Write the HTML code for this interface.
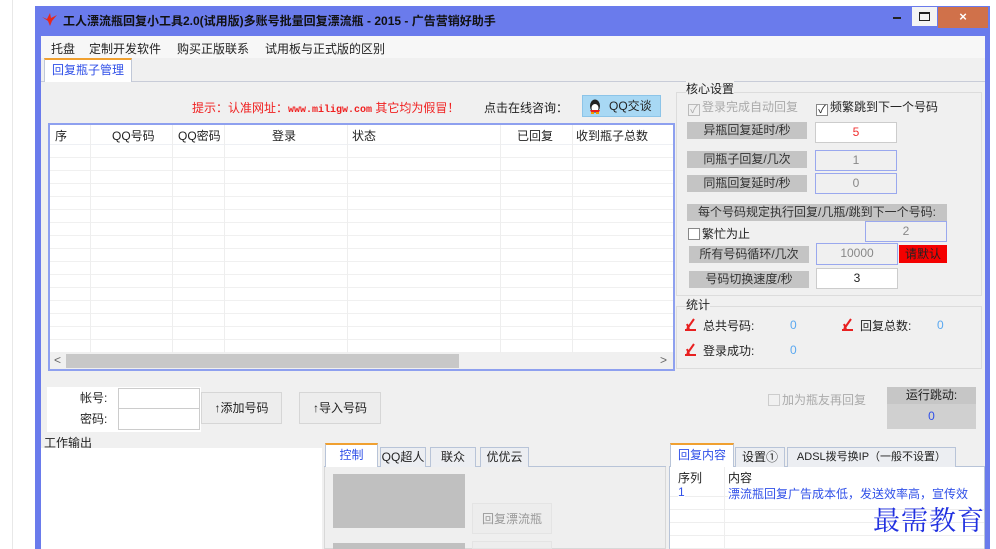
<!DOCTYPE html>
<html><head><meta charset="utf-8"><style>
*{margin:0;padding:0;box-sizing:border-box}
body{width:996px;height:549px;overflow:hidden;background:#fff;position:relative;font-family:"Liberation Sans","Noto Sans CJK SC",sans-serif;font-size:12px;color:#222}
.a{position:absolute;white-space:nowrap}
.lbl{position:absolute;background:#c4c4c4;text-align:center;line-height:17px;color:#333}
.inp{position:absolute;background:#f0f0f0;border:1px solid #9aa8ee;text-align:center;line-height:18px;color:#888}
.cb{display:inline-block;width:12px;height:12px;border:1px solid #888;background:#fff;vertical-align:-2px;margin-right:2px;font-size:11px;line-height:10px;text-align:center}
.tab{position:absolute;border:1px solid #b8c4d8;border-bottom:none;background:#eceef2;text-align:center;line-height:20px}
.btn{position:absolute;background:#ededed;border:1px solid #d6d6d6;text-align:center}
</style></head><body>
<div class="a" style="left:12px;top:0;width:1px;height:549px;background:#e8e8e8"></div>
<!-- window -->
<div class="a" style="left:35px;top:6px;width:955px;height:543px;background:#6a7bec"></div>
<svg class="a" style="left:41px;top:11px" width="18" height="16" viewBox="0 0 18 16"><path d="M1 6 L6 8 L9 2 L10 7 L16 4 L11 10 L9 15 L7 10 Z" fill="#e8281c"/></svg>
<div class="a" style="left:63px;top:12px;font-weight:bold;font-size:12px;color:#111">工人漂流瓶回复小工具2.0(试用版)多账号批量回复漂流瓶 - 2015 - 广告营销好助手</div>
<div class="a" style="left:893px;top:17px;width:8px;height:2px;background:#222"></div>
<div class="a" style="left:912px;top:7px;width:25px;height:19px;background:#f4f4f4"></div>
<div class="a" style="left:919px;top:12px;width:11px;height:9px;border:1px solid #222;border-top-width:2px"></div>
<div class="a" style="left:938px;top:7px;width:50px;height:21px;background:#d0714a;color:#fff;text-align:center;font-size:13px;line-height:20px;font-weight:bold">×</div>
<div class="a" style="left:41px;top:36px;width:944px;height:513px;background:#f0f0f0"></div>
<div class="a" style="left:41px;top:36px;width:944px;height:22px;background:#f7f7f7"></div>
<div class="a" style="left:51px;top:40px">托盘</div>
<div class="a" style="left:89px;top:40px">定制开发软件</div>
<div class="a" style="left:177px;top:40px">购买正版联系</div>
<div class="a" style="left:265px;top:40px">试用板与正式版的区别</div>
<div class="a" style="left:41px;top:81px;width:944px;height:1px;background:#c8ccd8"></div>
<div class="a" style="left:44px;top:58px;width:88px;height:24px;background:#fff;border:1px solid #c0c8d8;border-top:2px solid #f0a030;border-bottom:none;color:#3050e8;text-align:center;line-height:20px">回复瓶子管理</div>
<!-- tip -->
<div class="a" style="left:192px;top:99px;color:#f02020">提示：认准网址：<span style="font-family:'Liberation Mono',monospace;font-size:10px;font-weight:bold">www.miligw.com</span> 其它均为假冒！</div>
<div class="a" style="left:484px;top:99px">点击在线咨询：</div>
<div class="a" style="left:582px;top:95px;width:79px;height:22px;background:#a8d8f4;border:1px solid #8cc4e8;line-height:20px;padding-left:26px">QQ交谈</div>
<svg class="a" style="left:588px;top:98px" width="14" height="16" viewBox="0 0 14 16"><ellipse cx="7" cy="8" rx="5" ry="6.5" fill="#222"/><ellipse cx="7" cy="10" rx="3.5" ry="4" fill="#fff"/><path d="M2 12 L12 12 L11 14 L3 14Z" fill="#e82020"/><path d="M3 15 L6 15 M8 15 L11 15" stroke="#f0a000" stroke-width="2"/></svg>
<!-- table -->
<div class="a" style="left:48px;top:123px;width:627px;height:248px;background:#fff;border:2px solid #8ea0ef"></div>
<div class="a" style="left:50px;top:125px;width:623px;height:20px;border-bottom:1px solid #eef0f4"></div>
<div class="a" style="left:50px;top:145px;width:623px;height:208px;background:repeating-linear-gradient(#fff 0,#fff 12px,#f0f0f0 12px,#f0f0f0 13px)"></div>
<div class="a" style="left:90px;top:125px;width:1px;height:228px;background:#eee"></div>
<div class="a" style="left:172px;top:125px;width:1px;height:228px;background:#eee"></div>
<div class="a" style="left:224px;top:125px;width:1px;height:228px;background:#eee"></div>
<div class="a" style="left:347px;top:125px;width:1px;height:228px;background:#eee"></div>
<div class="a" style="left:500px;top:125px;width:1px;height:228px;background:#eee"></div>
<div class="a" style="left:572px;top:125px;width:1px;height:228px;background:#eee"></div>
<div class="a" style="left:55px;top:127px">序</div>
<div class="a" style="left:112px;top:127px">QQ号码</div>
<div class="a" style="left:178px;top:127px">QQ密码</div>
<div class="a" style="left:272px;top:127px">登录</div>
<div class="a" style="left:352px;top:127px">状态</div>
<div class="a" style="left:517px;top:127px">已回复</div>
<div class="a" style="left:576px;top:127px">收到瓶子总数</div>
<div class="a" style="left:50px;top:353px;width:623px;height:16px;background:#f0f0f0"></div>
<div class="a" style="left:66px;top:354px;width:393px;height:14px;background:#c8c8c8"></div>
<div class="a" style="left:54px;top:353px;color:#666">&lt;</div>
<div class="a" style="left:660px;top:353px;color:#666">&gt;</div>
<!-- right core settings -->
<div class="a" style="left:676px;top:92px;width:306px;height:204px;border:1px solid #dcdcdc"></div>
<div class="a" style="left:686px;top:80px;background:#f0f0f0">核心设置</div>
<div class="a" style="left:688px;top:98px;color:#aaa"><span class="cb" style="border-color:#bbb;background:#f0f0f0;color:#aaa">✓</span>登录完成自动回复</div>
<div class="a" style="left:816px;top:98px"><span class="cb">✓</span>频繁跳到下一个号码</div>
<div class="lbl" style="left:687px;top:122px;width:120px">异瓶回复延时/秒</div>
<div class="inp" style="left:815px;top:122px;width:82px;height:21px;background:#fff;border-color:#ccc;color:#f03030">5</div>
<div class="lbl" style="left:687px;top:151px;width:120px">同瓶子回复/几次</div>
<div class="inp" style="left:815px;top:150px;width:82px;height:21px">1</div>
<div class="lbl" style="left:687px;top:175px;width:120px">同瓶回复延时/秒</div>
<div class="inp" style="left:815px;top:173px;width:82px;height:21px">0</div>
<div class="lbl" style="left:687px;top:204px;width:260px">每个号码规定执行回复/几瓶/跳到下一个号码:</div>
<div class="a" style="left:688px;top:225px"><span class="cb"></span>繁忙为止</div>
<div class="inp" style="left:865px;top:221px;width:82px;height:21px">2</div>
<div class="lbl" style="left:689px;top:246px;width:120px">所有号码循环/几次</div>
<div class="inp" style="left:816px;top:243px;width:82px;height:22px">10000</div>
<div class="a" style="left:899px;top:245px;width:48px;height:18px;background:#f40000;text-align:center;line-height:18px;color:#222">请默认</div>
<div class="lbl" style="left:689px;top:271px;width:120px">号码切换速度/秒</div>
<div class="inp" style="left:816px;top:268px;width:82px;height:21px;background:#fff;border-color:#ccc;color:#222">3</div>
<div class="a" style="left:676px;top:306px;width:306px;height:63px;border:1px solid #dcdcdc"></div>
<div class="a" style="left:686px;top:296px;background:#f0f0f0">统计</div>
<svg class="a" style="left:684px;top:317px" width="14" height="14" viewBox="0 0 14 14"><path d="M1 13 L12 13 M3 12 L10 2 M5 12 L3 7" stroke="#e82020" stroke-width="2" fill="none"/></svg>
<div class="a" style="left:703px;top:317px">总共号码:</div>
<div class="a" style="left:790px;top:318px;color:#5aa8f0">0</div>
<svg class="a" style="left:841px;top:317px" width="14" height="14" viewBox="0 0 14 14"><path d="M1 13 L12 13 M3 12 L10 2 M5 12 L3 7" stroke="#e82020" stroke-width="2" fill="none"/></svg>
<div class="a" style="left:860px;top:317px">回复总数:</div>
<div class="a" style="left:937px;top:318px;color:#5aa8f0">0</div>
<svg class="a" style="left:684px;top:342px" width="14" height="14" viewBox="0 0 14 14"><path d="M1 13 L12 13 M3 12 L10 2 M5 12 L3 7" stroke="#e82020" stroke-width="2" fill="none"/></svg>
<div class="a" style="left:703px;top:342px">登录成功:</div>
<div class="a" style="left:790px;top:343px;color:#5aa8f0">0</div>
<!-- account area -->
<div class="a" style="left:47px;top:387px;width:154px;height:45px;background:#fff"></div>
<div class="a" style="left:80px;top:389px">帐号:</div>
<div class="a" style="left:80px;top:410px">密码:</div>
<div class="a" style="left:118px;top:388px;width:82px;height:21px;border:1px solid #ccc;background:#fff"></div>
<div class="a" style="left:118px;top:408px;width:82px;height:22px;border:1px solid #ccc;background:#fff"></div>
<div class="btn" style="left:201px;top:392px;width:81px;height:32px;line-height:30px">↑添加号码</div>
<div class="btn" style="left:299px;top:392px;width:82px;height:32px;line-height:30px">↑导入号码</div>
<div class="a" style="left:768px;top:391px;color:#aaa"><span class="cb" style="border-color:#ccc;background:#f0f0f0"></span>加为瓶友再回复</div>
<div class="a" style="left:887px;top:387px;width:89px;height:17px;background:#c6c6c6;text-align:center;line-height:17px">运行跳动:</div>
<div class="a" style="left:887px;top:404px;width:89px;height:25px;background:#d0d0d0;text-align:center;line-height:24px;color:#3050e8">0</div>
<!-- work output -->
<div class="a" style="left:44px;top:434px">工作输出</div>
<div class="a" style="left:41px;top:448px;width:281px;height:101px;background:#fff"></div>
<!-- middle tabs -->
<div class="a" style="left:324px;top:466px;width:342px;height:83px;border:1px solid #d8d8d8;background:#efefef"></div>
<div class="a" style="left:324px;top:466px;width:342px;height:1px;background:#b8c4d8"></div>
<div class="tab" style="left:325px;top:443px;width:53px;height:24px;background:#fff;border-top:2px solid #f0a030;color:#3050e8">控制</div>
<div class="tab" style="left:380px;top:447px;width:46px;height:20px;line-height:18px">QQ超人</div>
<div class="tab" style="left:430px;top:447px;width:46px;height:20px;line-height:18px">联众</div>
<div class="tab" style="left:480px;top:447px;width:49px;height:20px;line-height:18px">优优云</div>
<div class="a" style="left:333px;top:474px;width:132px;height:54px;background:#c0c0c0"></div>
<div class="btn" style="left:472px;top:503px;width:80px;height:31px;line-height:30px;color:#999;border-color:#e4e4e4">回复漂流瓶</div>
<div class="a" style="left:333px;top:543px;width:132px;height:6px;background:#c0c0c0"></div>
<div class="btn" style="left:472px;top:541px;width:80px;height:8px;border-color:#e4e4e4"></div>
<!-- right tabs -->
<div class="a" style="left:669px;top:466px;width:316px;height:83px;background:#fff;border:1px solid #b8c4d8"></div>
<div class="tab" style="left:670px;top:443px;width:64px;height:24px;background:#fff;border-top:2px solid #f0a030;color:#3050e8">回复内容</div>
<div class="tab" style="left:735px;top:447px;width:50px;height:20px;line-height:18px">设置①</div>
<div class="tab" style="left:787px;top:447px;width:169px;height:20px;line-height:18px;font-size:11px">ADSL拨号换IP（一般不设置）</div>
<div class="a" style="left:670px;top:484px;width:314px;height:65px;background:repeating-linear-gradient(#fff 0,#fff 12px,#eee 12px,#eee 13px)"></div>
<div class="a" style="left:724px;top:467px;width:1px;height:82px;background:#eee"></div>
<div class="a" style="left:678px;top:469px">序列</div>
<div class="a" style="left:728px;top:469px">内容</div>
<div class="a" style="left:678px;top:485px;color:#3050e8;background:#fff">1</div>
<div class="a" style="left:728px;top:485px;width:256px;overflow:hidden;color:#3050e8;background:#fff">漂流瓶回复广告成本低，发送效率高，宣传效</div>
<div class="a" style="left:873px;top:499px;font-family:'Noto Serif CJK SC',serif;font-size:27px;color:#2030e0;letter-spacing:1px">最需教育</div>
</body></html>
